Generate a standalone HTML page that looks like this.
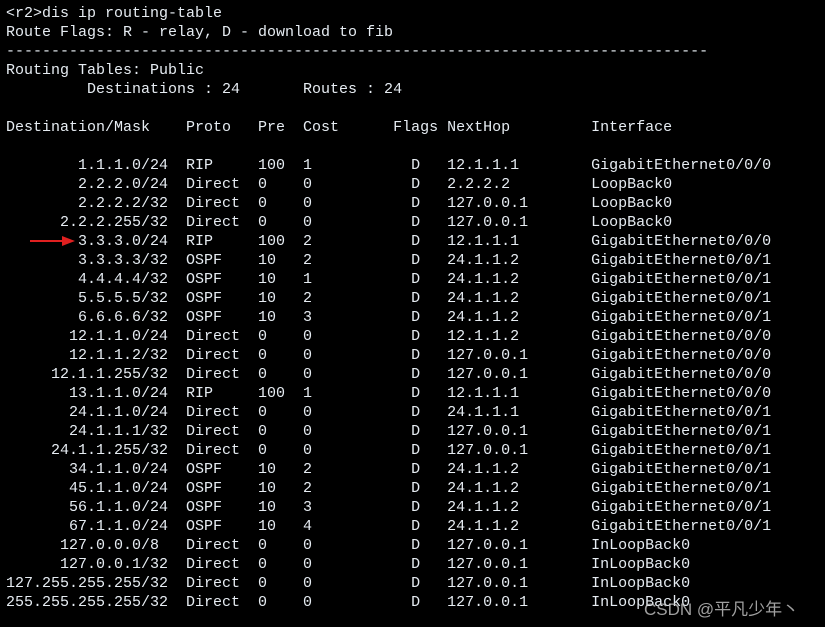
<!DOCTYPE html>
<html><head><meta charset="utf-8"><style>
html,body{margin:0;padding:0;background:#000;width:825px;height:627px;overflow:hidden}
pre{margin:0;position:absolute;left:6px;top:4px;font-family:"Liberation Mono",monospace;font-size:15px;line-height:19px;color:#e6ecf2}
.wm{position:absolute;left:644px;top:595px;font-family:"Liberation Sans","Noto Sans CJK SC",sans-serif;font-size:17px;color:rgba(200,200,200,0.8)}
</style></head><body>
<pre>&lt;r2&gt;dis ip routing-table
Route Flags: R - relay, D - download to fib
------------------------------------------------------------------------------
Routing Tables: Public
         Destinations : 24       Routes : 24

Destination/Mask    Proto   Pre  Cost      Flags NextHop         Interface

        1.1.1.0/24  RIP     100  1           D   12.1.1.1        GigabitEthernet0/0/0
        2.2.2.0/24  Direct  0    0           D   2.2.2.2         LoopBack0
        2.2.2.2/32  Direct  0    0           D   127.0.0.1       LoopBack0
      2.2.2.255/32  Direct  0    0           D   127.0.0.1       LoopBack0
        3.3.3.0/24  RIP     100  2           D   12.1.1.1        GigabitEthernet0/0/0
        3.3.3.3/32  OSPF    10   2           D   24.1.1.2        GigabitEthernet0/0/1
        4.4.4.4/32  OSPF    10   1           D   24.1.1.2        GigabitEthernet0/0/1
        5.5.5.5/32  OSPF    10   2           D   24.1.1.2        GigabitEthernet0/0/1
        6.6.6.6/32  OSPF    10   3           D   24.1.1.2        GigabitEthernet0/0/1
       12.1.1.0/24  Direct  0    0           D   12.1.1.2        GigabitEthernet0/0/0
       12.1.1.2/32  Direct  0    0           D   127.0.0.1       GigabitEthernet0/0/0
     12.1.1.255/32  Direct  0    0           D   127.0.0.1       GigabitEthernet0/0/0
       13.1.1.0/24  RIP     100  1           D   12.1.1.1        GigabitEthernet0/0/0
       24.1.1.0/24  Direct  0    0           D   24.1.1.1        GigabitEthernet0/0/1
       24.1.1.1/32  Direct  0    0           D   127.0.0.1       GigabitEthernet0/0/1
     24.1.1.255/32  Direct  0    0           D   127.0.0.1       GigabitEthernet0/0/1
       34.1.1.0/24  OSPF    10   2           D   24.1.1.2        GigabitEthernet0/0/1
       45.1.1.0/24  OSPF    10   2           D   24.1.1.2        GigabitEthernet0/0/1
       56.1.1.0/24  OSPF    10   3           D   24.1.1.2        GigabitEthernet0/0/1
       67.1.1.0/24  OSPF    10   4           D   24.1.1.2        GigabitEthernet0/0/1
      127.0.0.0/8   Direct  0    0           D   127.0.0.1       InLoopBack0
      127.0.0.1/32  Direct  0    0           D   127.0.0.1       InLoopBack0
127.255.255.255/32  Direct  0    0           D   127.0.0.1       InLoopBack0
255.255.255.255/32  Direct  0    0           D   127.0.0.1       InLoopBack0
</pre>
<svg style="position:absolute;left:0;top:0" width="825" height="627"><line x1="30" y1="241" x2="66" y2="241" stroke="#e02020" stroke-width="2"/><polygon points="62,236 75,241 62,246" fill="#e02020"/></svg>
<div class="wm">CSDN @平凡少年丶</div>
</body></html>
